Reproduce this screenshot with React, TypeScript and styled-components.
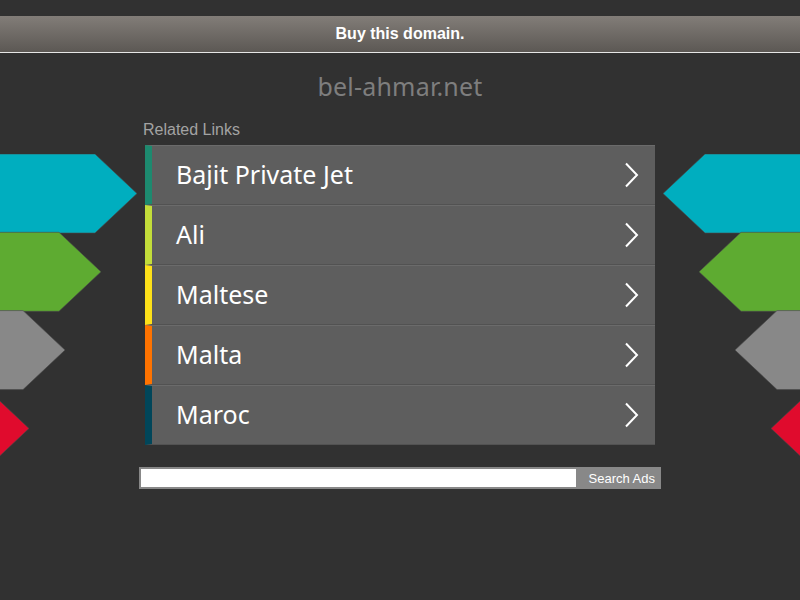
import styled, { createGlobalStyle } from 'styled-components';

const links = [
  { label: 'Bajit Private Jet', color: '#1d8a6f' },
  { label: 'Ali', color: '#c3dd3a' },
  { label: 'Maltese', color: '#fee119' },
  { label: 'Malta', color: '#ff7300' },
  { label: 'Maroc', color: '#01465a' },
];

const arrows = [
  { color: '#00aebf', tip: 137 },
  { color: '#5eab31', tip: 101 },
  { color: '#888888', tip: 65 },
  { color: '#e00b2d', tip: 29 },
];

function Arrows({ side }: { side: 'left' | 'right' }) {
  return (
    <S.Deco $side={side} width='140' height='320' viewBox='0 0 140 320'>
      <g transform={side === 'right' ? 'translate(140 0) scale(-1 1)' : undefined}>
        {arrows.map((a, i) => {
          const top = i * 78.3;
          const mid = top + 39.5;
          const bottom = top + 79;
          const base = a.tip - 42;
          return (
            <polygon
              key={a.color}
              fill={a.color}
              stroke='#4a4a4a'
              strokeWidth='0.6'
              points={`-20,${top} ${base},${top} ${a.tip},${mid} ${base},${bottom} -20,${bottom}`}
            />
          );
        })}
      </g>
    </S.Deco>
  );
}

function Chevron() {
  return (
    <S.Chevron width='16' height='26' viewBox='0 0 16 26'>
      <polyline points='3,1.5 14,13 3,24.5' fill='none' stroke='#ffffff' strokeWidth='2' />
    </S.Chevron>
  );
}

export default function App() {
  return (
    <>
      <GlobalStyle />
      <S.Page>
        <S.Banner>Buy this domain.</S.Banner>
        <S.Title>bel-ahmar.net</S.Title>
        <S.Main>
          <Arrows side='left' />
          <Arrows side='right' />
          <S.Column>
            <S.Caption>Related Links</S.Caption>
            <S.List>
              {links.map((l) => (
                <S.Row key={l.label} $accent={l.color}>
                  <S.RowText>{l.label}</S.RowText>
                  <Chevron />
                </S.Row>
              ))}
            </S.List>
          </S.Column>
          <S.Search>
            <S.Input type='text' />
            <S.SearchButton>Search Ads</S.SearchButton>
          </S.Search>
        </S.Main>
      </S.Page>
    </>
  );
}

const GlobalStyle = createGlobalStyle`
  html, body {
    margin: 0;
    padding: 0;
    background: #313131;
  }
  body {
    font-family: "Liberation Sans", Arial, sans-serif;
  }
`;

const S = {
  Page: styled.div`
    width: 800px;
    height: 600px;
    overflow: hidden;
    padding-top: 16px;
    box-sizing: border-box;
    display: flex;
    flex-direction: column;
  `,

  Banner: styled.div`
    height: 36px;
    display: flex;
    align-items: center;
    justify-content: center;
    background: linear-gradient(to bottom, #827d78, #5c5854);
    border-bottom: 1px solid #e6e6e6;
    color: #ffffff;
    font-weight: bold;
    font-size: 16px;
  `,

  Title: styled.div`
    margin-top: 15px;
    height: 36px;
    line-height: 36px;
    text-align: center;
    color: #7e7e7e;
    font-family: "Noto Sans", sans-serif;
    font-size: 25px;
    letter-spacing: 0.2px;
  `,

  Main: styled.div`
    position: relative;
    display: flex;
    flex-direction: column;
    align-items: center;
    margin-top: 17px;
  `,

  Deco: styled.svg<{ $side: 'left' | 'right' }>`
    position: absolute;
    top: 33px;
    ${({ $side }) => ($side === 'left' ? 'left: 0;' : 'right: 0;')}
  `,

  Column: styled.div`
    position: relative;
    width: 510px;
    display: flex;
    flex-direction: column;
  `,

  Caption: styled.div`
    color: #a3a3a3;
    font-size: 16px;
    height: 24px;
    line-height: 18px;
    margin-left: -2px;
  `,

  List: styled.div`
    display: flex;
    flex-direction: column;
  `,

  Row: styled.div<{ $accent: string }>`
    height: 60px;
    box-sizing: border-box;
    display: flex;
    align-items: center;
    justify-content: space-between;
    padding: 0 16px 0 24px;
    background: #5e5e5e;
    border-left: 7px solid ${({ $accent }) => $accent};
    border-top: 1px solid #6b6b6b;
    border-bottom: 1px solid #525252;
  `,

  RowText: styled.span`
    color: #ffffff;
    font-family: "Noto Sans", sans-serif;
    font-size: 25px;
    margin-bottom: 3px;
  `,

  Chevron: styled.svg`
    display: block;
  `,

  Search: styled.div`
    position: relative;
    margin-top: 22px;
    width: 522px;
    height: 22px;
    box-sizing: border-box;
    display: flex;
    border: 2px solid #888888;
    background: #888888;
  `,

  Input: styled.input`
    flex: 1;
    margin: 0;
    padding: 0;
    border: none;
    outline: none;
    background: #ffffff;
    height: 18px;
  `,

  SearchButton: styled.div`
    width: 79px;
    display: flex;
    align-items: center;
    justify-content: flex-end;
    padding-right: 4px;
    color: #ffffff;
    font-size: 13px;
  `,
};
